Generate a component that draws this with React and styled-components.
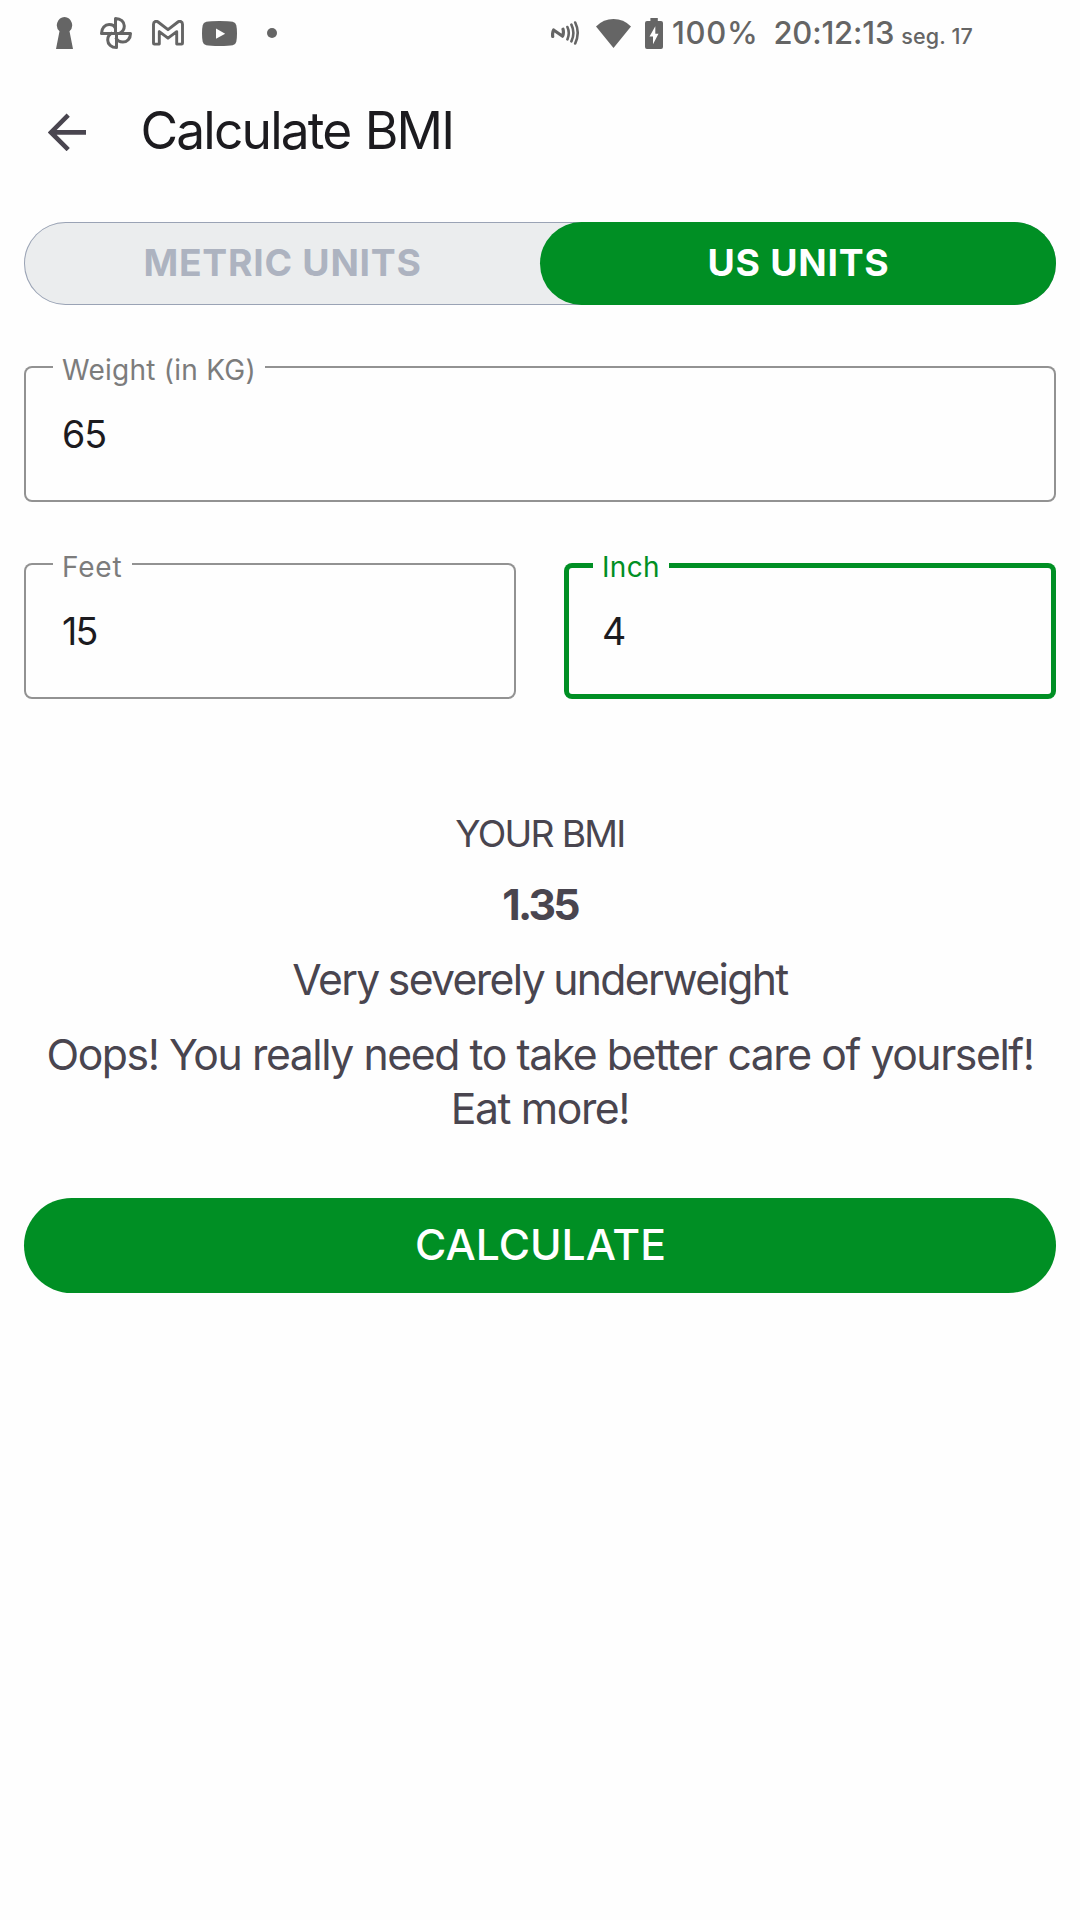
import React, { useState } from 'react';
import styled, { createGlobalStyle, ThemeProvider } from 'styled-components';

const theme = {
  green: '#008f24',
  ink: '#1c1b1f',
  body: '#49454f',
  status: '#656565',
  outline: '#929292',
  label: '#7c7c7c',
};

const GlobalStyle = createGlobalStyle`
  * { box-sizing: border-box; }
  body {
    margin: 0;
    background: #fefefe;
    font-family: Inter, Roboto, sans-serif;
    -webkit-font-smoothing: antialiased;
  }
  button, input { font-family: inherit; }
`;

const Screen = styled.div`
  display: flex;
  flex-direction: column;
  width: 1080px;
  min-height: 1920px;
`;

const StatusBar = styled.div`
  display: flex;
  align-items: center;
  justify-content: space-between;
  height: 66px;
  padding: 0 107px 0 56px;
  color: ${({ theme }) => theme.status};
`;

const Notifications = styled.div`
  display: flex;
  align-items: center;
`;

const Glyph = styled.svg`
  display: block;
  flex: none;
  margin-left: ${({ $gap = 0 }) => $gap}px;
`;

const SystemInfo = styled.div`
  display: flex;
  align-items: center;
  height: 66px;
`;

const StatusText = styled.span`
  font-size: 31px;
  font-weight: 500;
  line-height: 66px;
  white-space: pre;
  letter-spacing: ${({ $spacing }) => $spacing}px;
  margin-left: ${({ $gap }) => $gap}px;
`;

const StatusDate = styled(StatusText)`
  padding-top: 6px;
  font-size: 21.5px;
  line-height: 60px;
`;

const Header = styled.header`
  display: flex;
  align-items: center;
  height: 132px;
  padding-left: 48px;
`;

const BackButton = styled.button`
  display: flex;
  padding: 0;
  border: 0;
  background: none;
  color: ${({ theme }) => theme.body};
`;

const Title = styled.h1`
  margin: 0 0 0 54.5px;
  padding-bottom: 4px;
  color: ${({ theme }) => theme.ink};
  font-size: 51.5px;
  font-weight: 400;
  line-height: 60px;
  letter-spacing: -1.85px;
  word-spacing: 1.5px;
`;

const Content = styled.main`
  display: flex;
  flex-direction: column;
  padding: 24px 24px 0;
`;

const UnitToggle = styled.div`
  display: grid;
  grid-template-columns: 1fr 1fr;
  height: 83px;
  border-radius: 42px;
  background: #ebedee;
  box-shadow: inset 0 0 0 1px #9aa3b5;
`;

const UnitOption = styled.button`
  padding: 0 0 2px 1px;
  border: 0;
  border-radius: 42px;
  background: ${({ $active, theme }) => ($active ? theme.green : 'transparent')};
  color: ${({ $active }) => ($active ? '#fff' : '#adb3c0')};
  font-size: 37.3px;
  font-weight: 650;
  line-height: 81px;
  letter-spacing: 0.75px;
`;

const Fields = styled.div`
  display: grid;
  grid-template-columns: 1fr 1fr;
  gap: 61px 48px;
  margin-top: 61px;
`;

const FieldBox = styled.label`
  position: relative;
  display: flex;
  height: 136px;
  grid-column: ${({ $wide }) => ($wide ? '1 / -1' : 'auto')};
  border-radius: 8px;
  box-shadow: inset 0 0 0
    ${({ $focused, theme }) => ($focused ? `5px ${theme.green}` : `2px ${theme.outline}`)};
`;

const FieldLabel = styled.span`
  position: absolute;
  top: -12px;
  left: 29px;
  width: ${({ $width }) => $width}px;
  padding-left: 9px;
  background: #fefefe;
  color: ${({ $focused, theme }) => ($focused ? theme.green : theme.label)};
  font-size: 28px;
  line-height: 32px;
  white-space: nowrap;
  letter-spacing: ${({ $spacing }) => $spacing}px;
`;

const FieldInput = styled.input`
  width: 100%;
  padding: 0 0 0 38px;
  border: 0;
  outline: 0;
  background: transparent;
  color: ${({ theme }) => theme.ink};
  font-size: 37.6px;
  letter-spacing: ${({ $spacing = 0 }) => $spacing}px;
`;

const Result = styled.section`
  display: flex;
  flex-direction: column;
  margin-top: 110px;
  color: ${({ theme }) => theme.body};
  text-align: center;
`;

const ResultCaption = styled.div`
  font-size: 37.3px;
  line-height: 49px;
  letter-spacing: -1.7px;
`;

const ResultValue = styled.div`
  margin-top: 19px;
  font-size: 42.7px;
  font-weight: 700;
  line-height: 55px;
  letter-spacing: -2.8px;
`;

const ResultCategory = styled.div`
  margin-top: 20px;
  font-size: 42.7px;
  line-height: 55px;
  letter-spacing: -1.65px;
  word-spacing: -1.2px;
`;

const ResultAdvice = styled.p`
  margin: 21px 0 0;
  font-size: 42.7px;
  line-height: 54px;
  letter-spacing: -1.42px;
`;

const CalculateButton = styled.button`
  height: 95px;
  margin-top: 62px;
  padding: 0 0 2px 1px;
  border: 0;
  border-radius: 48px;
  background: ${({ theme }) => theme.green};
  color: #fff;
  font-size: 42.7px;
  font-weight: 500;
  line-height: 93px;
`;

const KeyholeIcon = () => (
  <Glyph width="17" height="32" viewBox="0 0 17 32" fill="currentColor">
    <path d="M8.500 0a8.200 8.200 0 0 1 5 14.200L17 32H0L3.500 14.200A8.200 8.200 0 0 1 8.500 0z" />
  </Glyph>
);

const PinwheelIcon = () => (
  <Glyph $gap={27} width="32" height="32" viewBox="0 0 32 32" fill="none" stroke="currentColor" strokeWidth="3" strokeLinejoin="round">
    <path d="M15.500 16.400V1.500c5.200 0 8.800 3.400 8.800 7.600 0 3.200-1.800 5.800-4.600 7.300" />
    <path d="M15.600 16.400h14.900c0 5.200-3.400 8.600-7.600 8.600-3.200 0-5.800-1.700-7.100-4.400" />
    <path d="M16.500 15.500v15c-5.200 0-8.800-3.400-8.800-7.600 0-3.200 1.800-5.800 4.600-7" />
    <path d="M16.400 16.400H1.500c0-5.200 3.400-8.800 7.600-8.800 3.200 0 5.800 1.800 6.600 4.400" />
  </Glyph>
);

const MailIcon = () => (
  <Glyph $gap={20} width="32" height="26" viewBox="0 0 32 26" fill="none" stroke="currentColor" strokeWidth="2.900" strokeLinejoin="round">
    <path d="M1.500 23.200V4.200c0-2.600 2.600-3.700 4.600-2.200L16 9.700 25.900 2c2-1.500 4.600-.4 4.600 2.200v19q0 .9-.9.900h-4.900V11.600L16 18.200l-8.700-6.600v12.500H2.400q-.9 0-.9-.9z" />
  </Glyph>
);

const VideoIcon = () => (
  <Glyph $gap={18} width="35" height="25" viewBox="0 0 35 25" fill="currentColor">
    <path fillRule="evenodd" d="M4.300.8Q8 0 17.500 0t13.200.8q3 .7 3.600 3.500.7 3 .7 8.200t-.7 8.200q-.6 2.800-3.600 3.500-3.700.8-13.200.8t-13.200-.8Q1.300 23.500.7 20.700 0 17.700 0 12.500t.7-8.200Q1.300 1.500 4.300.8zM14 7.600v10.200l9.200-5.100z" />
  </Glyph>
);

const MoreDot = () => (
  <Glyph $gap={30} width="10" height="10" viewBox="0 0 10 10" fill="currentColor">
    <circle cx="5" cy="5" r="5" />
  </Glyph>
);

const NfcIcon = () => (
  <Glyph width="28" height="24" viewBox="0 0 28 24" fill="none" stroke="currentColor" strokeWidth="2.600" strokeLinecap="round" strokeLinejoin="round">
    <path d="M1.700 15.500q-.5-4 .9-6.500l9 6.200q1.400-3.200.4-7" strokeWidth="3.200" />
    <path d="M16.400 6q2.800 6 0 12.400M20.400 3.600q4 8.200 0 16.800M24.200 1.500q5 10 0 21" />
  </Glyph>
);

const WifiIcon = () => (
  <Glyph $gap={17} width="35" height="29" viewBox="0 0 35 29" fill="currentColor">
    <path d="M0 7.400Q7.500 0 17.500 0T35 7.400L17.500 29z" />
  </Glyph>
);

const BatteryIcon = () => (
  <Glyph $gap={14} width="18" height="31" viewBox="0 0 18 31" fill="currentColor">
    <path fillRule="evenodd" d="M5.400 0h7.400v3H16q2 0 2 2v24q0 2-2 2H2q-2 0-2-2V5q0-2 2-2h3.400zM10.300 8.300 4.500 18.600H8v7.700l5.500-10.600h-3.200z" />
  </Glyph>
);

const BackIcon = () => (
  <svg width="38" height="38" viewBox="0 0 38 38" fill="none" stroke="currentColor" strokeWidth="4.600">
    <path d="M38 19.400H4M20.200 2.200 3 19.400l17.200 17.200" />
  </svg>
);

function Field({ label, value, focused, wide, labelWidth, labelSpacing, spacing }) {
  const [text, setText] = useState(value);
  return (
    <FieldBox $focused={focused} $wide={wide}>
      <FieldLabel $focused={focused} $width={labelWidth} $spacing={labelSpacing}>
        {label}
      </FieldLabel>
      <FieldInput value={text} onChange={(e) => setText(e.target.value)} $spacing={spacing} />
    </FieldBox>
  );
}

export default function App() {
  const [unit, setUnit] = useState('us');
  return (
    <ThemeProvider theme={theme}>
      <GlobalStyle />
      <Screen>
        <StatusBar>
          <Notifications>
            <KeyholeIcon />
            <PinwheelIcon />
            <MailIcon />
            <VideoIcon />
            <MoreDot />
          </Notifications>
          <SystemInfo>
            <NfcIcon />
            <WifiIcon />
            <BatteryIcon />
            <StatusText $gap={9} $spacing={0.7}>100%</StatusText>
            <StatusText $gap={15} $spacing={-0.18}>20:12:13</StatusText>
            <StatusDate $gap={7} $spacing={0.15}>seg. 17</StatusDate>
          </SystemInfo>
        </StatusBar>
        <Header>
          <BackButton aria-label="Back">
            <BackIcon />
          </BackButton>
          <Title>Calculate BMI</Title>
        </Header>
        <Content>
          <UnitToggle>
            <UnitOption $active={unit === 'metric'} onClick={() => setUnit('metric')}>METRIC UNITS</UnitOption>
            <UnitOption $active={unit === 'us'} onClick={() => setUnit('us')}>US UNITS</UnitOption>
          </UnitToggle>
          <Fields>
            <Field wide label="Weight (in KG)" value="65" labelWidth={212} labelSpacing={0.25} spacing={-1} />
            <Field label="Feet" value="15" labelWidth={79} labelSpacing={0.8} spacing={-1.9} />
            <Field focused label="Inch" value="4" labelWidth={76} labelSpacing={0.31} />
          </Fields>
          <Result>
            <ResultCaption>YOUR BMI</ResultCaption>
            <ResultValue>1.35</ResultValue>
            <ResultCategory>Very severely underweight</ResultCategory>
            <ResultAdvice>
              Oops! You really need to take better care of yourself!
              <br />
              Eat more!
            </ResultAdvice>
          </Result>
          <CalculateButton>CALCULATE</CalculateButton>
        </Content>
      </Screen>
    </ThemeProvider>
  );
}
